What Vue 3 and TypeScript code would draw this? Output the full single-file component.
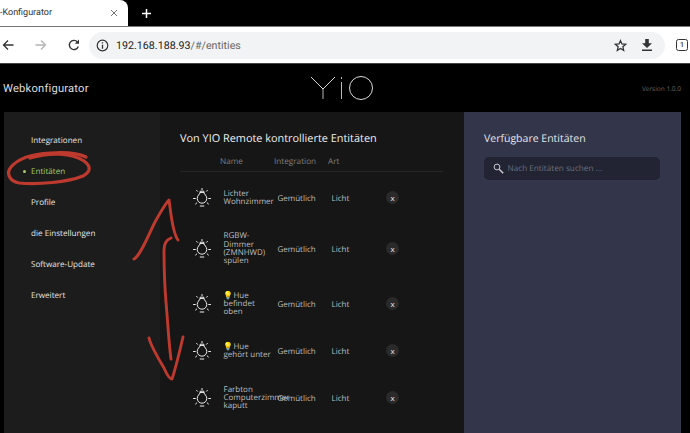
<script setup lang="ts">
interface Row { name: string; emoji: boolean; height: number }
const navItems: string[] = ['Integrationen', 'Entitäten', 'Profile', 'die Einstellungen', 'Software-Update', 'Erweitert']
const rows: Row[] = [
  { name: 'Lichter Wohnzimmer', emoji: false, height: 39 },
  { name: 'RGBW-Dimmer (ZMNHWD) spülen', emoji: false, height: 63 },
  { name: 'Hue befindet oben', emoji: true, height: 47 },
  { name: 'Hue gehört unter', emoji: true, height: 47 },
  { name: 'Farbton Computerzimmer kaputt', emoji: false, height: 47 },
]
</script>

<template>
  <div class="page">
    <div class="tabstrip">
      <div class="tab">
        <span class="tab-title">-Konfigurator</span>
        <svg class="tab-close" width="8" height="8" viewBox="0 0 8 8"><path d="M1 1l6 6M7 1L1 7" stroke="#777" stroke-width="1" /></svg>
      </div>
      <svg class="new-tab" width="11" height="11" viewBox="0 0 11 11"><path d="M5.5 1v9M1 5.500h9" stroke="#fff" stroke-width="1.500" /></svg>
    </div>
    <div class="toolbar">
      <svg class="tool back" width="12" height="12" viewBox="0 0 12 12"><path d="M11.500 6H1.500M6 1.500L1.500 6 6 10.500" fill="none" stroke="#333" stroke-width="1.300" /></svg>
      <svg class="tool forward" width="12" height="12" viewBox="0 0 12 12"><path d="M.5 6h10M6 1.500L10.500 6 6 10.500" fill="none" stroke="#b5b5b5" stroke-width="1.300" /></svg>
      <svg class="tool reload" width="12" height="12" viewBox="0 0 12 12"><path d="M10.300 7.500A4.600 4.600 0 1 1 9.300 2.800" fill="none" stroke="#333" stroke-width="1.400" /><path d="M11 .5v4.200H6.800z" fill="#333" /></svg>
      <div class="omnibox">
        <svg width="13" height="13" viewBox="0 0 13 13"><circle cx="6.500" cy="6.500" r="5.300" fill="none" stroke="#333" stroke-width="1.200" /><path d="M6.500 5.700v4M6.500 3.300v1.300" stroke="#333" stroke-width="1.300" /></svg>
        <span class="url"><span class="host">192.168.188.93</span>/#/entities</span>
        <svg class="star" width="13" height="13" viewBox="0 0 24 24"><path d="M12 3l2.700 6.200 6.800.6-5.100 4.500 1.500 6.700L12 17.500 6.100 21l1.500-6.700-5.100-4.500 6.800-.6z" fill="none" stroke="#333" stroke-width="2.300" /></svg>
        <svg class="download" width="10" height="12" viewBox="0 0 10 12"><path d="M3.200 0h3.600v4.200H10L5 9 0 4.200h3.200zM0 10.600h10V12H0z" fill="#333" /></svg>
      </div>
      <span class="tabs-count">1</span>
    </div>

    <header class="app-header">
      <span class="brand">Webkonfigurator</span>
      <svg class="logo" width="66" height="26" viewBox="0 0 66 26">
        <g fill="none" stroke="#f2f2f2" stroke-width="0.900">
          <path d="M1 2l12 12 12-12" />
          <path d="M13 14v10" stroke="#999" stroke-width="1.200" />
          <path d="M31.500 7v17" stroke="#bbb" stroke-width="1" />
          <path d="M31.500 2v2" stroke="#bbb" stroke-width="1" />
          <circle cx="51" cy="13" r="11.500" />
        </g>
      </svg>
      <span class="version">Version 1.0.0</span>
    </header>

    <main class="panels">
      <nav class="sidebar">
        <a v-for="(item, i) in navItems" :key="item" class="nav-item" :class="{ active: i === 1 }">{{ item }}</a>
      </nav>

      <section class="center">
        <h1 class="title">Von YIO Remote kontrollierte Entitäten</h1>
        <div class="head-row">
          <span class="h-name">Name</span>
          <span class="h-int">Integration</span>
          <span class="h-art">Art</span>
        </div>
        <div v-for="row in rows" :key="row.name" class="row" :style="{ height: row.height + 'px' }">
          <svg class="bulb" width="18" height="19" viewBox="0 0 18 19">
            <g fill="none" stroke="#f0f0f0" stroke-width="1" stroke-linecap="round">
              <path d="M7 4.800C6.800 6.400 4.200 7.600 4.200 10.400a4.800 4.800 0 0 0 9.600 0C13.800 7.600 11.200 6.400 11 4.800z" />
              <path d="M7.200 4.800V3.200h3.600v1.600" />
              <path d="M9 .5v1.200M3.600 2.400l.9.900M14.400 2.400l-.9.900M.5 10.500h1.800M15.700 10.500h1.800M2.600 16l1.200-1.100M15.400 16l-1.200-1.100M7.200 18h3.600" />
            </g>
          </svg>
          <div class="cell-name"><span v-if="row.emoji" class="emoji">💡</span>{{ row.name }}</div>
          <div class="cell-int">Gemütlich</div>
          <div class="cell-art">Licht</div>
          <button class="remove">x</button>
        </div>
      </section>

      <aside class="available">
        <h2 class="avail-title">Verfügbare Entitäten</h2>
        <div class="search">
          <svg width="11" height="11" viewBox="0 0 11 11"><circle cx="4" cy="4" r="2.900" fill="none" stroke="#c9c9d0" stroke-width="1" /><path d="M6.200 6.200l4 4" stroke="#c9c9d0" stroke-width="1.500" /></svg>
          <span>Nach Entitäten suchen ...</span>
        </div>
      </aside>
    </main>

    <svg class="scribble" width="690" height="433" viewBox="0 0 690 433">
      <g fill="none" stroke="#bf3a2e" stroke-linecap="round" stroke-linejoin="round">
        <path stroke-width="3.200" d="M30 158C50 152 72 153 84 161C92 167 90 172 83 176C68 182 38 185 19 183C9 181 6 173 11 167C17 160 30 154 50 153C64 152 78 153 86 157" />
        <path stroke-width="2.900" d="M134 259C140 256 147 238 155 222C160 213 165 204 169 200C171 212 172 232 178 240" />
        <path stroke-width="2.900" d="M171 238C166 240 164 244 164 250C164 270 165 290 166 302C168 325 169 345 171 359" />
        <path stroke-width="2.900" d="M149 338C151 346 158 358 164 368C167 375 170 379 172 379C175 370 180 350 183 337" />
      </g>
    </svg>
  </div>
</template>

<style scoped>
.page {
  position: relative;
  width: 690px;
  height: 433px;
  overflow: hidden;
  background: #000;
  font-family: "Open Sans", sans-serif;
  color: #ddd;
  text-rendering: geometricPrecision;
}
.tabstrip {
  display: flex;
  align-items: center;
  height: 26px;
  background: #000;
}
.tab {
  display: flex;
  align-items: center;
  justify-content: space-between;
  width: 128px;
  height: 26px;
  padding: 0 10px 0 0;
  box-sizing: border-box;
  background: #fff;
  border-top-right-radius: 8px;
  font-family: Roboto, sans-serif;
  font-size: 9px;
  color: #333;
}
.new-tab {
  margin-left: 13px;
}
.toolbar {
  display: flex;
  align-items: center;
  height: 38px;
  background: #fff;
  border-top: 1px solid #777;
  border-bottom: 1px solid #444;
  box-sizing: border-box;
}
.tool {
  flex: none;
}
.back {
  margin-left: 2px;
}
.forward {
  margin-left: 21px;
}
.reload {
  margin-left: 21px;
}
.omnibox {
  display: flex;
  align-items: center;
  flex: none;
  width: 576px;
  height: 27px;
  margin-left: 9px;
  padding: 0 13px 0 7px;
  box-sizing: border-box;
  border-radius: 14px;
  background: #f1f3f4;
  font-family: Roboto, sans-serif;
  font-size: 10.700px;
  color: #666;
}
.url {
  margin-left: 7px;
  flex: 1;
}
.host {
  color: #222;
}
.download {
  margin-left: 15px;
}
.star {
  flex: none;
}
.tabs-count {
  display: flex;
  align-items: center;
  justify-content: center;
  flex: none;
  width: 12px;
  height: 12px;
  box-sizing: border-box;
  margin-left: 11px;
  border: 1.200px solid #333;
  border-radius: 2.500px;
  font-family: Roboto, sans-serif;
  font-size: 7px;
  font-weight: 500;
  color: #333;
}
.app-header {
  position: relative;
  display: flex;
  align-items: center;
  justify-content: space-between;
  height: 48px;
  padding: 0 9px 0 3px;
}
.brand {
  font-family: Roboto, sans-serif;
  font-size: 11.200px;
  letter-spacing: 0.200px;
  color: #ddd;
}
.logo {
  position: absolute;
  left: 310px;
  top: 11px;
}
.version {
  font-size: 6.500px;
  color: #666;
}
.panels {
  display: flex;
  height: 321px;
  margin: 0 9px 0 4px;
}
.sidebar {
  display: flex;
  flex-direction: column;
  width: 156px;
  flex: none;
  padding-top: 18.500px;
  box-sizing: border-box;
  background: #1c1c1c;
}
.nav-item {
  position: relative;
  height: 31.200px;
  padding-left: 27px;
  font-size: 8.100px;
  line-height: 20px;
  color: #e6e6e6;
}
.nav-item.active {
  color: #a5cc6b;
}
.nav-item.active::before {
  content: "";
  position: absolute;
  left: 18.500px;
  top: 8.500px;
  width: 3px;
  height: 3px;
  border-radius: 50%;
  background: #a5cc6b;
}
.center {
  width: 304px;
  flex: none;
  padding: 18px 21px 0 20px;
  box-sizing: border-box;
  background: #161616;
}
.title {
  margin: 0;
  font-size: 10.900px;
  font-weight: 400;
  line-height: 18px;
  color: #f0f0f0;
  white-space: nowrap;
}
.head-row {
  position: relative;
  display: flex;
  height: 23px;
  line-height: 26px;
  margin-top: 1px;
  border-bottom: 1px solid #262626;
  box-sizing: border-box;
  font-size: 8.200px;
  color: #7f7f7f;
  margin-bottom: 6.500px;
}
.h-name {
  margin-left: 40px;
  width: 54px;
}
.h-int {
  width: 54px;
}
.row {
  display: flex;
  align-items: center;
  font-size: 8px;
  color: #bdbdbd;
}
.bulb {
  flex: none;
  margin-left: 13px;
  margin-bottom: 1px;
}
.cell-name {
  flex: none;
  width: 50px;
  margin-left: 12.500px;
  line-height: 8.300px;
  position: relative;
}
.emoji {
  font-family: "Noto Sans CJK SC", sans-serif;
  font-size: 8px;
  line-height: 0;
}
.cell-int {
  flex: none;
  width: 54px;
  margin-left: 4px;
  position: relative;
}
.cell-art {
  flex: none;
  width: 54px;
}
.remove {
  flex: none;
  width: 13px;
  height: 13px;
  margin-left: 0.500px;
  margin-bottom: 1px;
  padding: 0;
  border: none;
  border-radius: 50%;
  background: #2a2a2a;
  color: #e6e6e6;
  font-family: "Open Sans", sans-serif;
  font-size: 8px;
  line-height: 11px;
}
.available {
  flex: 1;
  padding: 18px 21px 0 20px;
  box-sizing: border-box;
  background: #33354a;
}
.avail-title {
  margin: 0;
  font-size: 10.500px;
  font-weight: 400;
  line-height: 18px;
  color: #e6e6ea;
  white-space: nowrap;
}
.search {
  display: flex;
  align-items: center;
  gap: 3.500px;
  height: 23px;
  margin-top: 9px;
  padding-left: 9px;
  border-radius: 5px;
  background: #222433;
  font-size: 8.200px;
  color: #6c6e7c;
}
.scribble {
  position: absolute;
  left: 0;
  top: 0;
  pointer-events: none;
}
</style>
